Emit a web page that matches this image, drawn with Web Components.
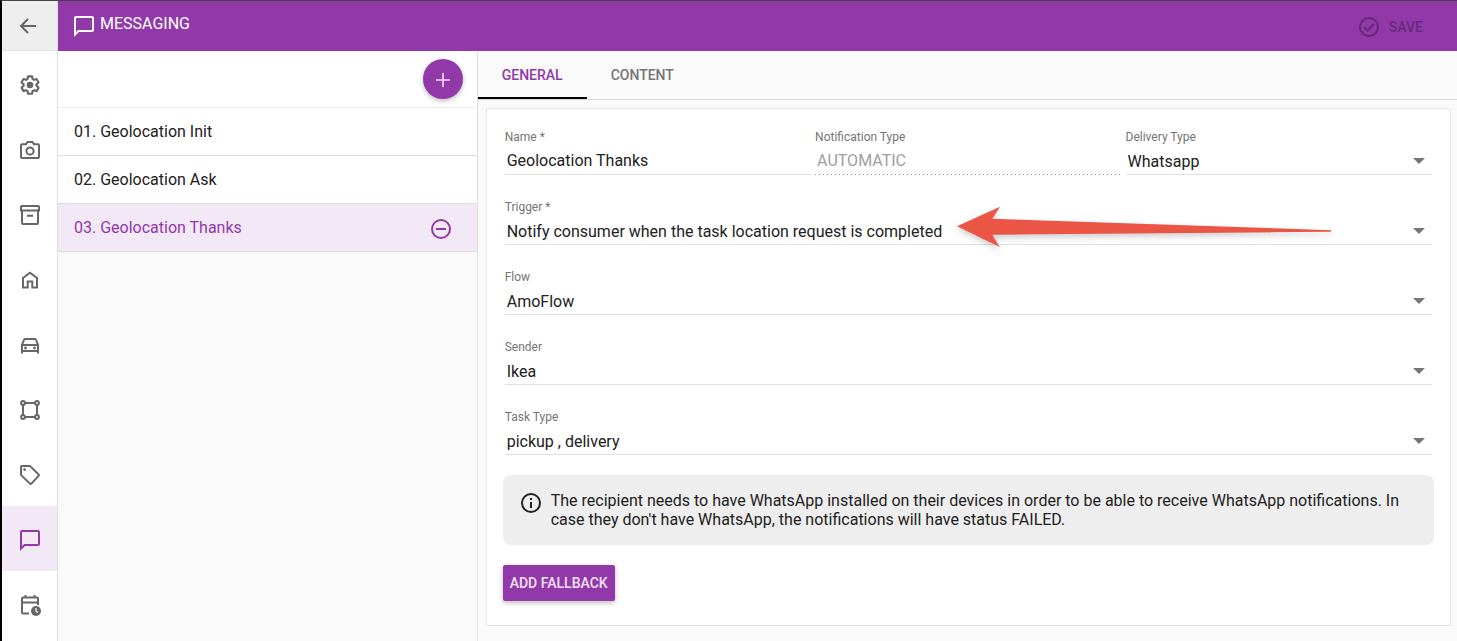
<!DOCTYPE html>
<html lang="en">
<head>
<meta charset="utf-8">
<meta name="viewport" content="width=device-width, initial-scale=1">
<title>Messaging</title>
<style>
  body {
    --primary: #9139a9;
    --primary-light: #f3e8f6;
    --line: #e0e0e0;
    --muted: #757575;
    margin: 0;
    color: #212121;
    background: #fafafa;
    font-family: Roboto, "Liberation Sans", sans-serif;
    font-size: 16px;
  }
</style>
</head>
<body>
<app-shell>
  <side-nav slot="nav"></side-nav>
  <page-header slot="header">MESSAGING</page-header>
  <message-list slot="list">
    <message-item>01. Geolocation Init</message-item>
    <message-item>02. Geolocation Ask</message-item>
    <message-item selected>03. Geolocation Thanks</message-item>
  </message-list>
  <tab-bar></tab-bar>
  <message-form></message-form>
</app-shell>

<script>
const gear = "M19.43 12.98c.04-.32.07-.64.07-.98 0-.34-.03-.66-.07-.98l2.11-1.65c.19-.15.24-.42.12-.64l-2-3.46c-.09-.16-.26-.25-.44-.25-.06 0-.12.01-.17.03l-2.49 1c-.52-.4-1.08-.73-1.69-.98l-.38-2.65C14.46 2.18 14.25 2 14 2h-4c-.25 0-.46.18-.49.42l-.38 2.65c-.61.25-1.17.59-1.69.98l-2.49-1c-.06-.02-.12-.03-.18-.03-.17 0-.34.09-.43.25l-2 3.46c-.13.22-.07.49.12.64l2.11 1.65c-.04.32-.07.65-.07.98 0 .33.03.66.07.98l-2.11 1.65c-.19.15-.24.42-.12.64l2 3.46c.09.16.26.25.44.25.06 0 .12-.01.17-.03l2.49-1c.52.4 1.08.73 1.69.98l.38 2.65c.03.24.24.42.49.42h4c.25 0 .46-.18.49-.42l.38-2.65c.61-.25 1.17-.59 1.69-.98l2.49 1c.06.02.12.03.18.03.17 0 .34-.09.43-.25l2-3.46c.12-.22.07-.49-.12-.64l-2.11-1.65z"

// 24x24 line icons, stroked with the current colour
const icons = {
  back: `<path d="M20 12H5.5M12 5l-7 7 7 7"/>`,
  settings: `<g transform="translate(1.6 1.6) scale(.87)" stroke-width="2.4"><path d="${gear}"/></g><circle cx="12" cy="12" r="3.3" fill="currentColor" stroke="none"/>`,
  camera: `<path d="M4 6.2h4l1.6-2.2h4.8L16 6.2h4q1 0 1 1V19q0 1-1 1H4q-1 0-1-1V7.2q0-1 1-1z"/><circle cx="12" cy="13" r="3.6"/>`,
  archive: `<path d="M3.8 3h16.4q.8 0 .8.8V7.500H3V3.800Q3 3 3.8 3zM4 7.500V20q0 1 1 1h14q1 0 1-1V7.500M9 12.700h6"/>`,
  home: `<path d="M5 10v9.500h4.700v-6h4.600v6H19V10l-7-5.300z"/>`,
  car: `<path d="M4 20.500V12l2-5.200q.2-.8 1-.8h10q.8 0 1 .8l2 5.200v8.500M4 12h16M4 18h16"/><circle cx="7.500" cy="15" r="1.400" fill="currentColor" stroke="none"/><circle cx="16.500" cy="15" r="1.400" fill="currentColor" stroke="none"/>`,
  polygon: `<path d="M7 5h10M7 19h10M5 7v10M19 7v10"/><circle cx="5" cy="5" r="1.900"/><circle cx="19" cy="5" r="1.900"/><circle cx="5" cy="19" r="1.900"/><circle cx="19" cy="19" r="1.900"/>`,
  tag: `<path d="M4 3h7.500q.5 0 .9.400l8.200 8.100q.7.700 0 1.400l-7.200 7.700q-.7.700-1.400 0L3.400 12.400Q3 12 3 11.500V4q0-1 1-1z"/><circle cx="6.600" cy="6.600" r="1.400" fill="currentColor" stroke="none"/>`,
  chat: `<path d="M3 20.500V4q0-1 1-1h16q1 0 1 1v12q0 1-1 1H6.500z"/>`,
  calendar: `<path d="M11 20.500H5q-1 0-1-1V5.500q0-1 1-1h14q1 0 1 1V12M4 9.500h16M7.500 2v3M16.500 2v3"/><circle cx="18" cy="18" r="5" fill="currentColor" stroke="none"/><path d="M18 15v3.200l2 1.300" stroke="#fff" stroke-width="1.200"/>`,
  check: `<circle cx="12" cy="12" r="9"/><path d="M7.300 12.300l3.200 3.200 6.400-6.500"/>`,
  remove: `<circle cx="12" cy="12" r="9"/><path d="M7 12h10"/>`,
  info: `<circle cx="12" cy="12" r="9"/><path d="M12 11v6M12 7v2"/>`,
  add: `<path d="M12 5v14M5 12h14" stroke-width="1.600"/>`
}

class UiIcon extends HTMLElement {
  constructor() {
    super()
    this.attachShadow({ mode: "open" })
  }

  connectedCallback() {
    this.shadowRoot.innerHTML = `
      <style>
        :host {
          display: block;
          flex: none;
          width: 24px;
          height: 24px;
        }
        svg {
          display: block;
          fill: none;
          stroke: currentColor;
          stroke-width: 2;
        }
      </style>
      <svg viewBox="0 0 24 24" width="24" height="24" aria-hidden="true">${icons[this.getAttribute("name")]}</svg>
    `
  }
}

// Registers an element whose shadow root never changes
function defineStatic(name, html) {
  const template = document.createElement("template")
  template.innerHTML = html
  customElements.define(name, class extends HTMLElement {
    constructor() {
      super()
      this.attachShadow({ mode: "open" })
      this.shadowRoot.appendChild(template.content.cloneNode(true))
    }
  })
}

customElements.define("ui-icon", UiIcon)

defineStatic("app-shell", `
  <style>
    :host {
      display: grid;
      grid-template-columns: 56px minmax(0, 1fr);
      box-sizing: border-box;
      min-height: 100vh;
      border-top: 1px solid #444;
      border-left: 2px solid #000;
    }
    .page {
      display: flex;
      flex-direction: column;
    }
    .columns {
      display: grid;
      grid-template-columns: 3fr 7fr;
      flex: 1;
    }
    main {
      min-width: 0;
    }
  </style>
  <slot name="nav"></slot>
  <div class="page">
    <slot name="header"></slot>
    <div class="columns">
      <slot name="list"></slot>
      <main><slot></slot></main>
    </div>
  </div>
`)

defineStatic("side-nav", `
  <style>
    :host {
      display: block;
      border-right: 1px solid var(--line);
      background: #fff;
      color: #666;
    }
    nav {
      display: flex;
      flex-direction: column;
    }
    a {
      display: flex;
      align-items: center;
      justify-content: center;
      box-sizing: border-box;
      height: 65px;
      padding-top: 3px;
      color: inherit;
    }
    .back {
      height: 50px;
      padding: 0 4px 0 0;
      border-bottom: 1px solid var(--line);
      background: #eee;
    }
    .active {
      background: var(--primary-light);
      color: var(--primary);
    }
  </style>
  <nav>
    <a class="back" href="#" aria-label="Back"><ui-icon name="back"></ui-icon></a>
    <a href="#" aria-label="Settings"><ui-icon name="settings"></ui-icon></a>
    <a href="#" aria-label="Photos"><ui-icon name="camera"></ui-icon></a>
    <a href="#" aria-label="Archive"><ui-icon name="archive"></ui-icon></a>
    <a href="#" aria-label="Home"><ui-icon name="home"></ui-icon></a>
    <a href="#" aria-label="Vehicles"><ui-icon name="car"></ui-icon></a>
    <a href="#" aria-label="Zones"><ui-icon name="polygon"></ui-icon></a>
    <a href="#" aria-label="Tags"><ui-icon name="tag"></ui-icon></a>
    <a class="active" href="#" aria-label="Messaging"><ui-icon name="chat"></ui-icon></a>
    <a href="#" aria-label="Schedule"><ui-icon name="calendar"></ui-icon></a>
  </nav>
`)

defineStatic("page-header", `
  <style>
    :host {
      display: flex;
      align-items: center;
      justify-content: space-between;
      height: 50px;
      padding: 0 34px 0 14px;
      background: var(--primary);
      color: #fff;
    }
    h1 {
      display: flex;
      align-items: center;
      gap: 4px;
      margin: 0;
      font-size: 16px;
      font-weight: 400;
      line-height: 20px;
    }
    h1 span {
      padding-bottom: 4px;
    }
    button {
      display: flex;
      align-items: center;
      gap: 8px;
      padding: 2px 0 0;
      border: 0;
      background: none;
      color: rgba(0, 0, 0, .3);
      font: 500 14px/20px Roboto, sans-serif;
    }
  </style>
  <h1><ui-icon name="chat"></ui-icon><span><slot></slot></span></h1>
  <button type="button" disabled><ui-icon name="check"></ui-icon>SAVE</button>
`)

defineStatic("message-list", `
  <style>
    :host {
      display: block;
      border-right: 1px solid var(--line);
    }
    .toolbar {
      display: flex;
      align-items: center;
      justify-content: flex-end;
      height: 56px;
      padding-right: 14px;
      border-bottom: 1px solid #eee;
      background: #fff;
    }
    button {
      display: flex;
      align-items: center;
      justify-content: center;
      width: 40px;
      height: 40px;
      padding: 2px 0 0;
      border: 0;
      border-radius: 50%;
      background: var(--primary);
      box-shadow: 0 2px 5px rgba(0, 0, 0, .26);
      color: #f3e0f7;
    }
  </style>
  <div class="toolbar">
    <button type="button" aria-label="Add"><ui-icon name="add"></ui-icon></button>
  </div>
  <slot></slot>
`)

class MessageItem extends HTMLElement {
  constructor() {
    super()
    this.attachShadow({ mode: "open" })
  }

  connectedCallback() {
    this.shadowRoot.innerHTML = `
      <style>
        :host {
          display: flex;
          align-items: center;
          justify-content: space-between;
          height: 47px;
          padding: 0 24px 0 16px;
          border-bottom: 1px solid #dcdcdc;
          background: #fff;
        }
        :host([selected]) {
          background: var(--primary-light);
          color: var(--primary);
        }
        button {
          padding: 3px 0 0;
          border: 0;
          background: none;
          color: inherit;
        }
      </style>
      <slot></slot>
      ${this.hasAttribute("selected") ? `<button type="button" aria-label="Remove"><ui-icon name="remove"></ui-icon></button>` : ""}
    `
  }
}

defineStatic("tab-bar", `
  <style>
    :host {
      display: flex;
      height: 48px;
      border-bottom: 1px solid #dcdcdc;
    }
    button {
      height: 48px;
      padding: 2px 24px 0;
      border: 0;
      border-bottom: 2px solid transparent;
      background: none;
      color: var(--muted);
      font: 500 14px/20px Roboto, sans-serif;
    }
    .active {
      border-color: #000;
      color: var(--primary);
    }
  </style>
  <button class="active" type="button">GENERAL</button>
  <button type="button">CONTENT</button>
`)

class FormField extends HTMLElement {
  constructor() {
    super()
    this.attachShadow({ mode: "open" })
  }

  connectedCallback() {
    const value = this.getAttribute("value")
    const disabled = this.hasAttribute("disabled") ? "disabled" : ""
    const control = this.hasAttribute("select")
      ? `<select id="control"><option>${value}</option></select>`
      : `<input id="control" type="text" value="${value}" ${disabled}>`

    this.shadowRoot.innerHTML = `
      <style>
        :host {
          display: block;
          position: relative;
          min-width: 0;
        }
        label {
          display: block;
          height: 16px;
          color: var(--muted);
          font-size: 12px;
          line-height: 16px;
        }
        .box {
          display: grid;
          align-items: center;
          border-bottom: 1px solid var(--line);
        }
        .box > * {
          grid-area: 1 / 1;
        }
        :host([disabled]) .box {
          border-bottom-color: transparent;
          background: repeating-linear-gradient(to right, #999 0 1px, transparent 1px 4px) bottom / 100% 1px no-repeat border-box;
        }
        input, select {
          appearance: none;
          box-sizing: border-box;
          width: 100%;
          height: 29px;
          margin: 0;
          padding: 2px 2px 0;
          border: 0;
          border-radius: 0;
          outline: 0;
          background: none;
          color: inherit;
          font: inherit;
        }
        select {
          padding-top: 4px;
        }
        input:disabled {
          color: #9e9e9e;
        }
        .arrow {
          justify-self: end;
          margin: 2px 7px 0 0;
          border: 6px solid transparent;
          border-top-color: var(--muted);
          border-bottom: 0;
          pointer-events: none;
        }
      </style>
      <label for="control">${this.getAttribute("label")}${this.hasAttribute("required") ? " *" : ""}</label>
      <div class="box">
        ${control}
        ${this.hasAttribute("select") ? `<span class="arrow"></span>` : ""}
      </div>
      <slot></slot>
    `
  }
}

// Red pointer that lies over a field
defineStatic("callout-arrow", `
  <style>
    :host {
      position: absolute;
      top: 6px;
      left: 450px;
      pointer-events: none;
    }
    svg {
      display: block;
      filter: drop-shadow(0 3px 3px rgba(0, 0, 0, .2));
    }
  </style>
  <svg width="380" height="44" viewBox="0 0 380 44" aria-hidden="true">
    <path fill="#ea5545" d="M2 21.300L45 1.700l-7.700 12L376 25.200v1.500L37.300 29.700l7.400 12.300z"/>
  </svg>
`)

defineStatic("info-note", `
  <style>
    :host {
      display: flex;
      gap: 8px;
      margin: 0 -2px;
      padding: 16px;
      border-radius: 8px;
      background: #eee;
      line-height: 19px;
    }
    p {
      margin: 0;
    }
  </style>
  <ui-icon name="info"></ui-icon>
  <p><slot></slot></p>
`)

defineStatic("message-form", `
  <style>
    :host {
      display: block;
      margin: 8px 6px 0 8px;
      padding: 20px 18px 24px;
      border: 1px solid #e6e6e6;
      border-radius: 2px;
      background: #fff;
    }
    form {
      display: grid;
      gap: 24px;
    }
    .row {
      display: grid;
      grid-template-columns: repeat(3, minmax(0, 1fr));
      gap: 4px;
    }
    .actions {
      display: grid;
      justify-items: start;
      gap: 20px;
      margin-top: -4px;
    }
    info-note {
      justify-self: stretch;
    }
    .actions button {
      height: 36px;
      margin-left: -2px;
      padding: 0 7px;
      border: 0;
      border-radius: 2px;
      background: var(--primary);
      box-shadow: 0 2px 5px rgba(0, 0, 0, .26);
      color: #f3e0f7;
      font: 500 14px/20px Roboto, sans-serif;
    }
  </style>
  <form>
    <div class="row">
      <form-field label="Name" value="Geolocation Thanks" required></form-field>
      <form-field label="Notification Type" value="AUTOMATIC" disabled></form-field>
      <form-field label="Delivery Type" value="Whatsapp" select></form-field>
    </div>
    <form-field label="Trigger" value="Notify consumer when the task location request is completed" required select>
      <callout-arrow></callout-arrow>
    </form-field>
    <form-field label="Flow" value="AmoFlow" select></form-field>
    <form-field label="Sender" value="Ikea" select></form-field>
    <form-field label="Task Type" value="pickup , delivery" select></form-field>
    <div class="actions">
      <info-note>The recipient needs to have WhatsApp installed on their devices in order to be able to receive WhatsApp notifications. In case they don't have WhatsApp, the notifications will have status FAILED.</info-note>
      <button type="button">ADD FALLBACK</button>
    </div>
  </form>
`)

customElements.define("message-item", MessageItem)
customElements.define("form-field", FormField)
</script>
</body>
</html>
